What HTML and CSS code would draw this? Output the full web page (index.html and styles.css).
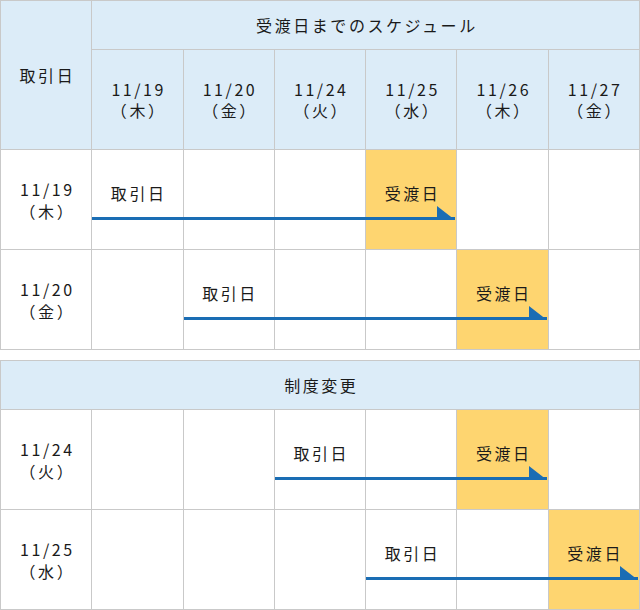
FILE: index.html
```html
<!DOCTYPE html>
<html lang="ja">
<head>
<meta charset="utf-8">
<title>受渡日までのスケジュール</title>
<link rel="stylesheet" href="styles.css">
</head>
<body>
<div class="schedule">
  <div class="grid grid-main">
    <div class="cell head corner">取引日</div>
    <div class="cell head title">受渡日までのスケジュール</div>
    <div class="cell head">11/19<br>（木）</div>
    <div class="cell head">11/20<br>（金）</div>
    <div class="cell head">11/24<br>（火）</div>
    <div class="cell head">11/25<br>（水）</div>
    <div class="cell head">11/26<br>（木）</div>
    <div class="cell head">11/27<br>（金）</div>

    <div class="cell date">11/19<br>（木）</div>
    <div class="cell label">取引日<span class="arrow span4"></span></div>
    <div class="cell"></div>
    <div class="cell"></div>
    <div class="cell label deliv">受渡日</div>
    <div class="cell"></div>
    <div class="cell"></div>

    <div class="cell date">11/20<br>（金）</div>
    <div class="cell"></div>
    <div class="cell label">取引日<span class="arrow span4"></span></div>
    <div class="cell"></div>
    <div class="cell"></div>
    <div class="cell label deliv">受渡日</div>
    <div class="cell"></div>
  </div>

  <div class="grid grid-change">
    <div class="cell head full">制度変更</div>

    <div class="cell date">11/24<br>（火）</div>
    <div class="cell"></div>
    <div class="cell"></div>
    <div class="cell label">取引日<span class="arrow span3"></span></div>
    <div class="cell"></div>
    <div class="cell label deliv">受渡日</div>
    <div class="cell"></div>

    <div class="cell date">11/25<br>（水）</div>
    <div class="cell"></div>
    <div class="cell"></div>
    <div class="cell"></div>
    <div class="cell label">取引日<span class="arrow span3"></span></div>
    <div class="cell"></div>
    <div class="cell label deliv">受渡日</div>
  </div>
</div>
</body>
</html>
```
FILE: styles.css
```css
html, body {
  margin: 0;
  padding: 0;
  background: #ffffff;
}

body {
  font-family: "Noto Sans CJK JP", "Noto Sans", sans-serif;
  font-size: 16px;
  color: #1a1a1a;
}

.schedule {
  width: 640px;
}

.grid {
  display: grid;
  grid-template-columns: repeat(7, 1fr);
  border-top: 1px solid #c9c9c9;
  border-left: 1px solid #c9c9c9;
}

.grid-main {
  grid-template-rows: 49px 100px 100px 100px;
}

.grid-change {
  margin-top: 10px;
  grid-template-rows: 49px 100px 100px;
}

.cell {
  position: relative;
  box-sizing: border-box;
  border-right: 1px solid #c9c9c9;
  border-bottom: 1px solid #c9c9c9;
  background: #ffffff;
  display: flex;
  align-items: center;
  justify-content: center;
  text-align: center;
  line-height: 22px;
  letter-spacing: 0.16em;
  padding-left: 0.16em;
}

.head {
  background: #dcecf8;
  line-height: 21px;
}

.corner {
  grid-row: span 2;
}

.title {
  grid-column: span 6;
}

.full {
  grid-column: span 7;
}

.label {
  align-items: flex-start;
  padding-top: 32px;
}

.deliv {
  background: #fed570;
}

.arrow {
  position: absolute;
  left: 0;
  top: 67px;
  height: 3px;
  background: #1a6db4;
  z-index: 1;
  width: calc(var(--span) * (100% + 1px) - 2px);
}

.arrow::after {
  content: "";
  position: absolute;
  right: 0;
  bottom: 0;
  width: 0;
  height: 0;
  border-bottom: 14px solid #1a6db4;
  border-right: 18px solid transparent;
}

.span3 {
  --span: 3;
}

.span4 {
  --span: 4;
}
```
